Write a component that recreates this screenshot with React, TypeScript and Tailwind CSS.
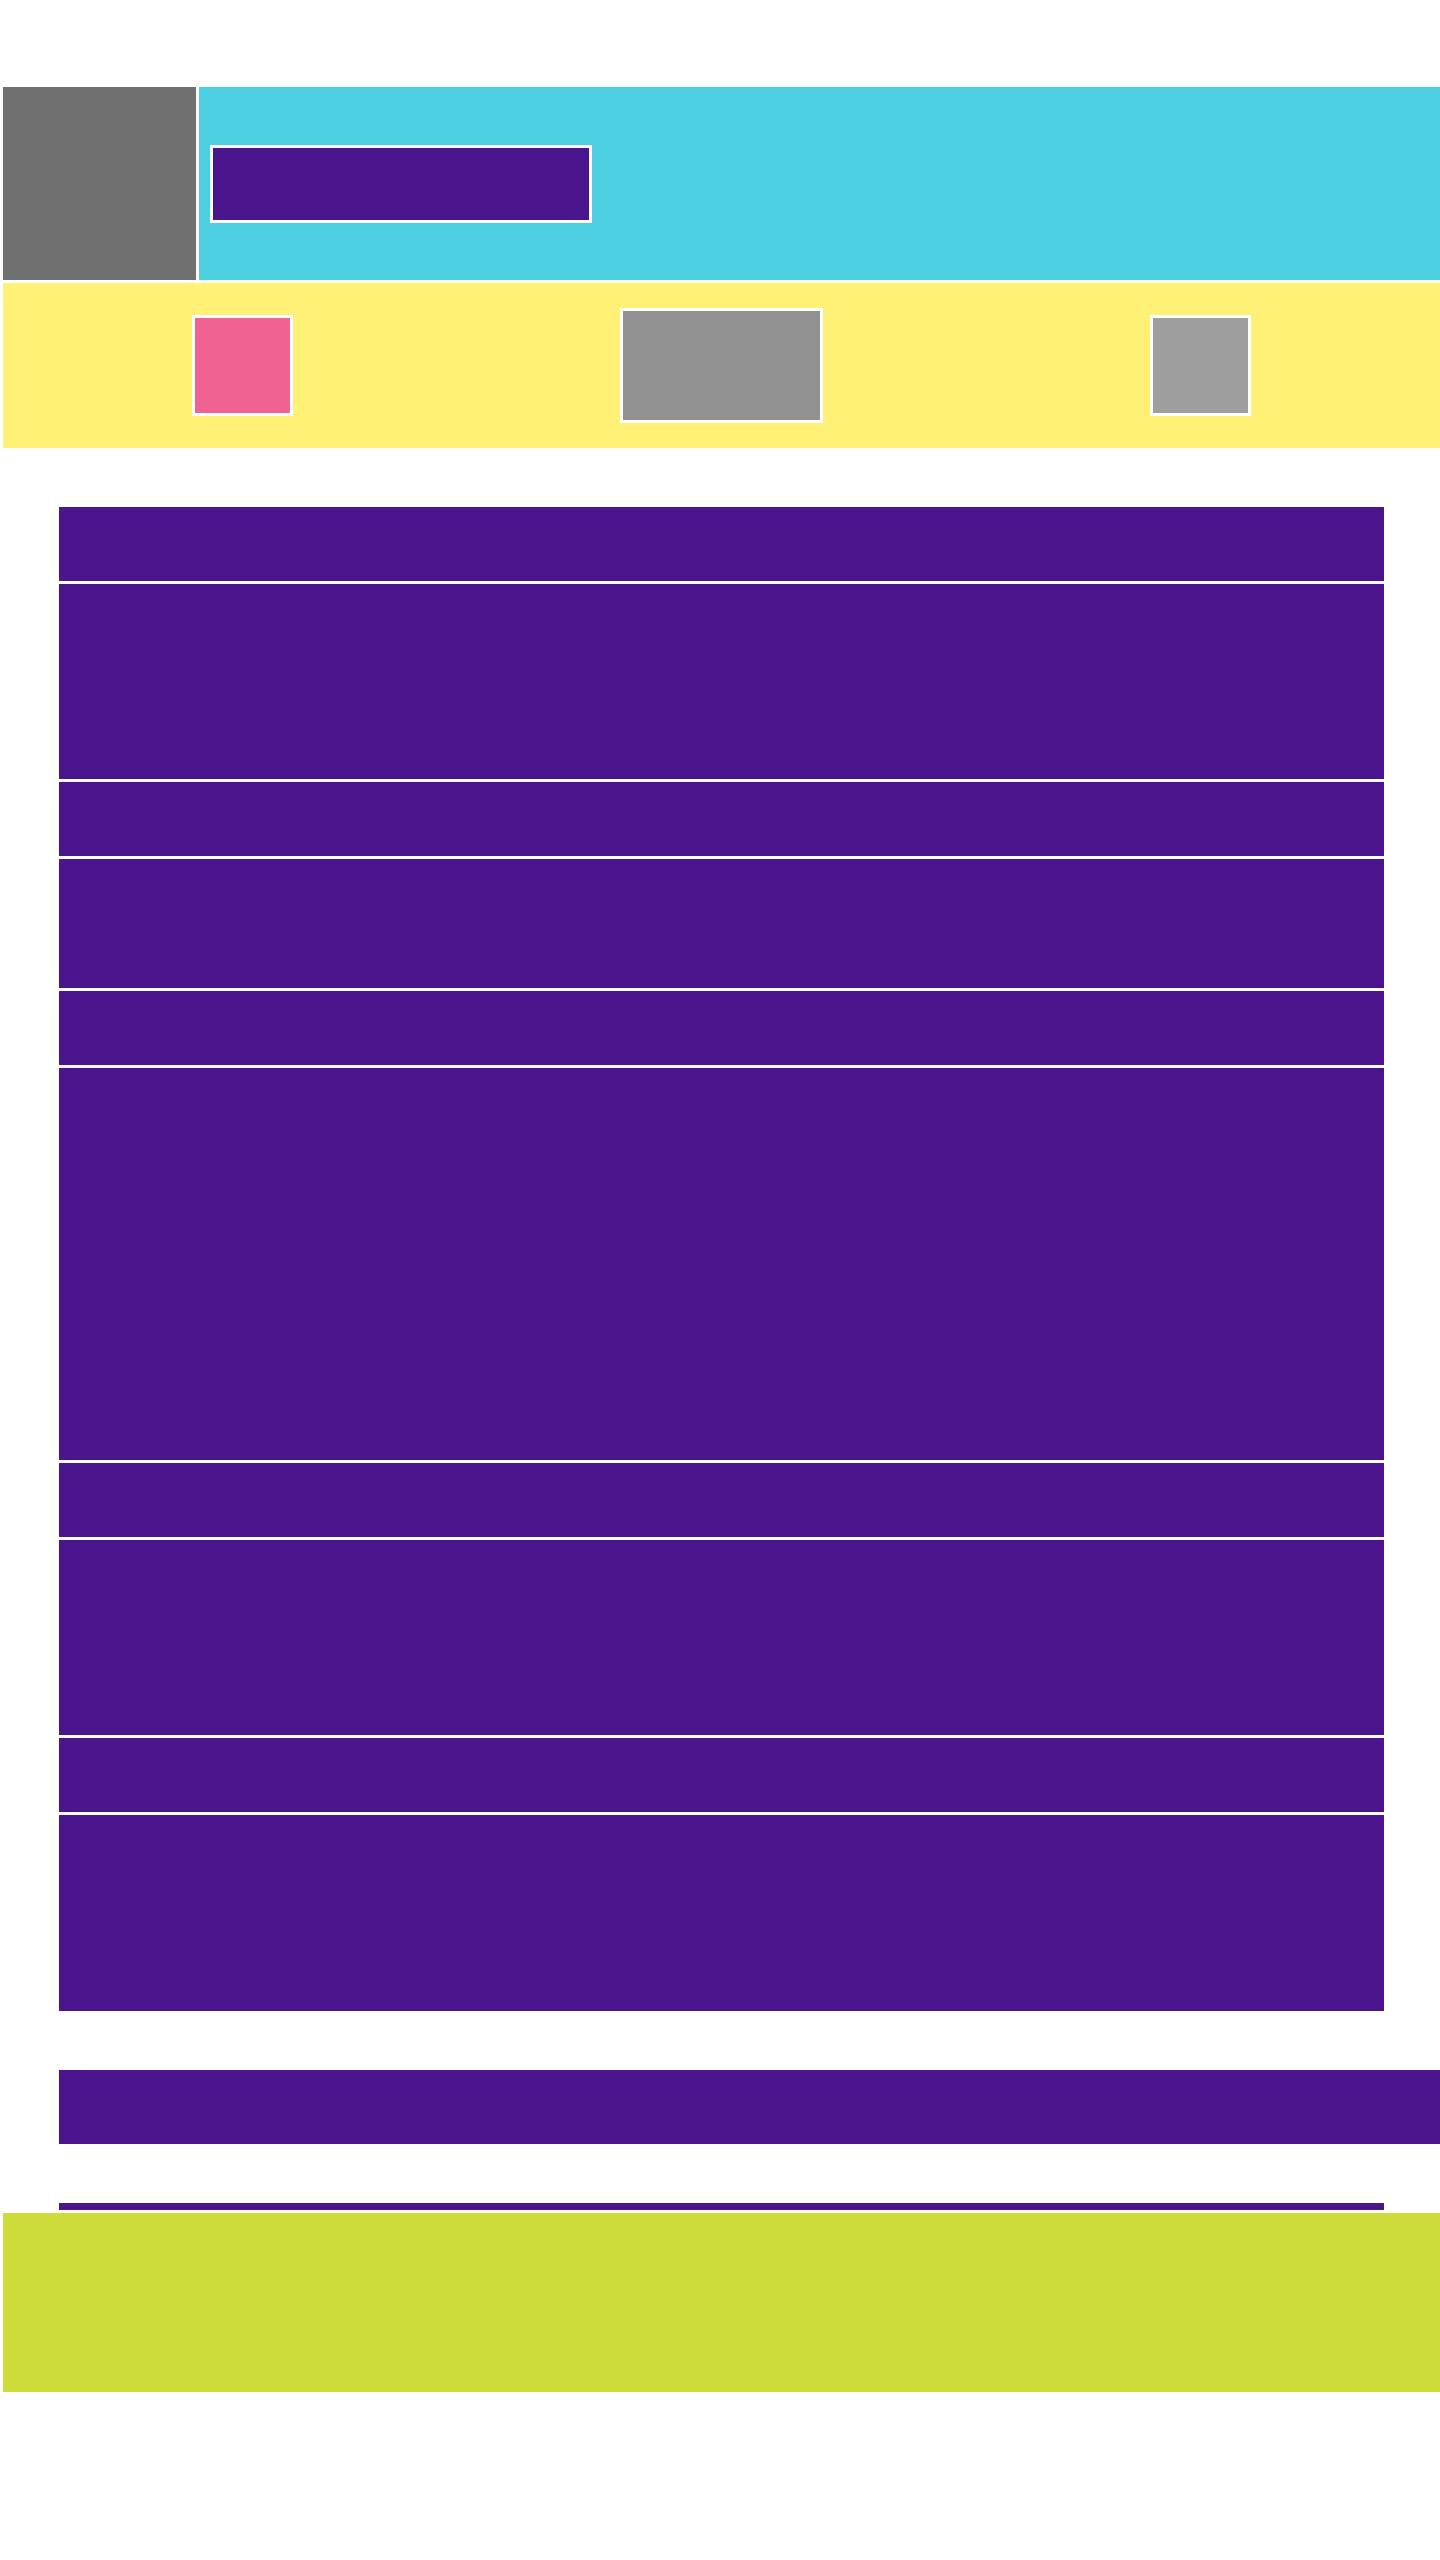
export default function App() {
  // heights of the stacked content rows, top to bottom
  const rows = [74, 195, 74, 129, 74, 392, 74, 195, 74, 196];

  return (
    <div className="min-h-[2560px] bg-white pt-[87px] pl-[3px]">
      {/* Header */}
      <header className="flex h-[193px] gap-[3px]">
        <div className="w-[193px] bg-[#707070]" />
        <div className="flex flex-1 items-center bg-[#4dd0e1] pl-[11px]">
          <div className="h-[78px] w-[382px] border-[3px] border-white bg-[#4a148c]" />
        </div>
      </header>

      {/* Feature strip */}
      <section className="mt-[3px] grid h-[165px] grid-cols-3 items-center justify-items-center bg-[#fff176]">
        <div className="h-[101px] w-[101px] border-[3px] border-white bg-[#f06292]" />
        <div className="h-[115px] w-[203px] border-[3px] border-white bg-[#919191]" />
        <div className="h-[101px] w-[101px] border-[3px] border-white bg-[#9e9e9e]" />
      </section>

      {/* Content rows */}
      <main className="px-[56px] pt-[59px]">
        <div className="flex flex-col gap-[3px]">
          {rows.map((h, i) => (
            <div key={i} className="bg-[#4a148c]" style={{ height: h }} />
          ))}
        </div>
      </main>

      <div className="ml-[56px] mt-[59px] h-[74px] bg-[#4a148c]" />

      <div className="mx-[56px] mt-[59px] h-[7px] bg-[#4a148c]" />

      {/* Footer */}
      <footer className="mt-[3px] h-[179px] bg-[#cddc39]" />
    </div>
  );
}
